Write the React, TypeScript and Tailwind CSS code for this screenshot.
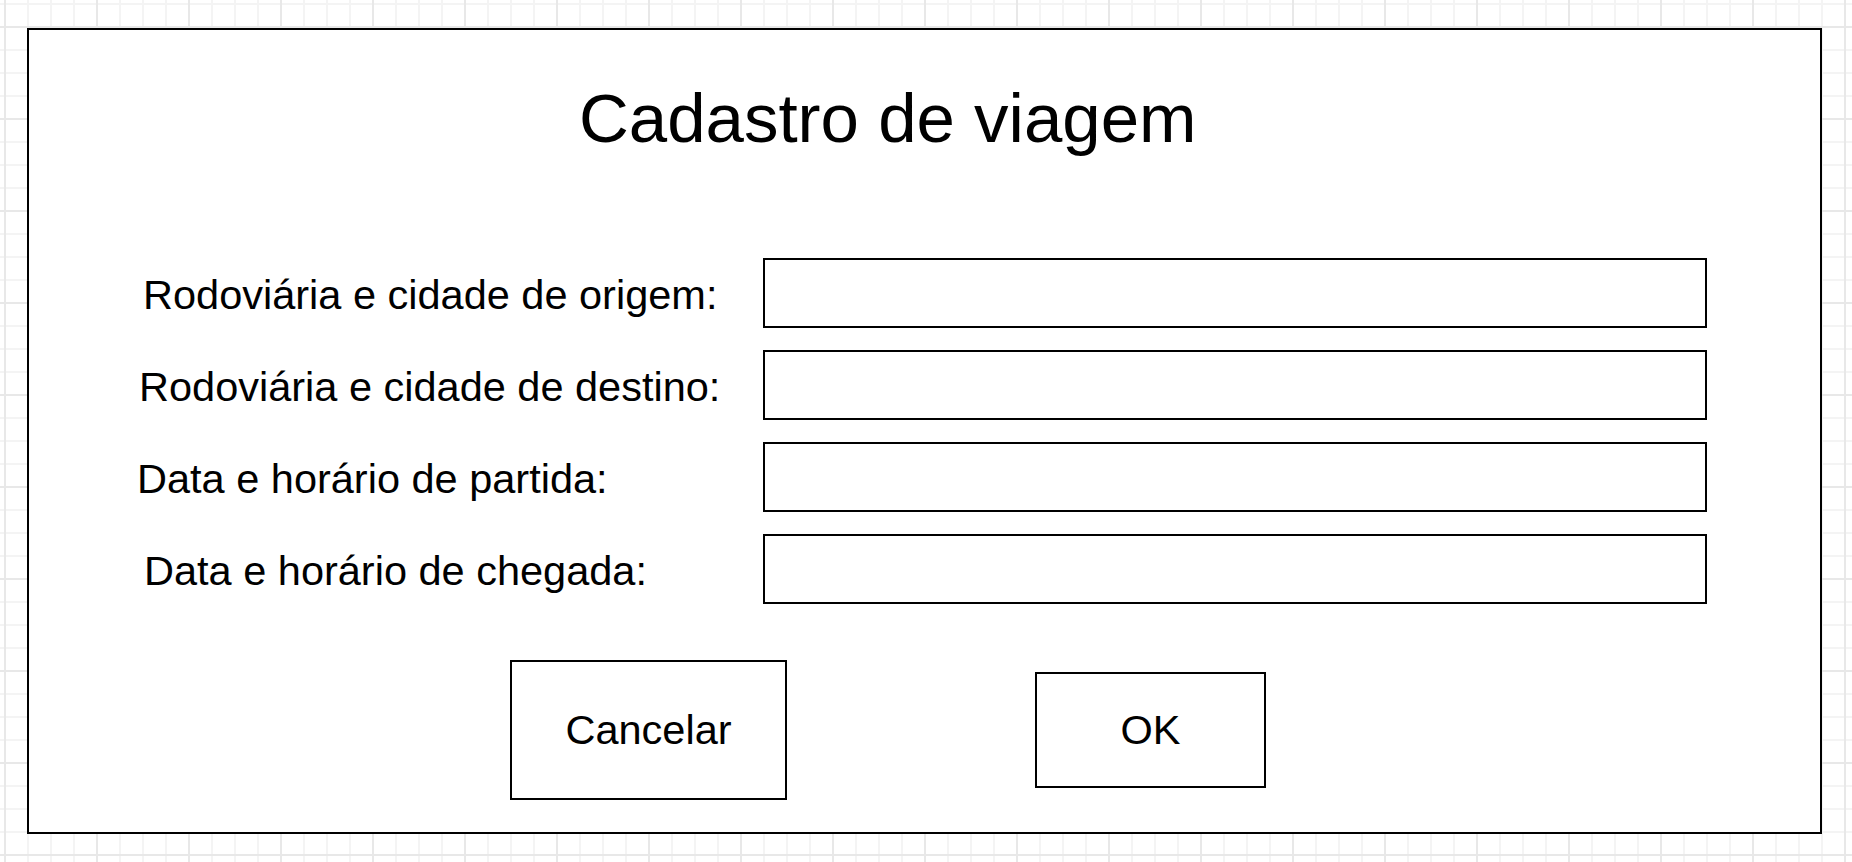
const fields = [
  { label: "Rodoviária e cidade de origem:", pad: "pl-[114px]" },
  { label: "Rodoviária e cidade de destino:", pad: "pl-[110px]" },
  { label: "Data e horário de partida:", pad: "pl-[108px]" },
  { label: "Data e horário de chegada:", pad: "pl-[115px]" },
];

export default function App() {
  return (
    <div className="w-[1852px] h-[862px] overflow-hidden pt-[28px] pl-[27px] bg-white bg-[linear-gradient(to_right,#e8e8e8_2px,transparent_2px),linear-gradient(to_bottom,#e8e8e8_2px,transparent_2px),linear-gradient(to_right,#f4f4f4_2px,transparent_2px),linear-gradient(to_bottom,#f4f4f4_2px,transparent_2px)] bg-[length:92px_92px,92px_92px,23px_23px,23px_23px] bg-[position:4px_26px,4px_26px,4px_3px,4px_3px] font-['Liberation_Sans',Arial,sans-serif] text-black">
      <div className="w-[1795px] h-[806px] border-2 border-black bg-white flex flex-col">
        {/* Title */}
        <h1 className="mt-[54px] ml-[550px] text-[69px] leading-[69px] font-normal">
          Cadastro de viagem
        </h1>

        {/* Form rows */}
        <div className="mt-[105px] flex flex-col gap-[22px]">
          {fields.map((f) => (
            <div key={f.label} className="flex items-center h-[70px]">
              <div className={`w-[734px] ${f.pad} pt-[3px] text-[41.5px] leading-none whitespace-nowrap`}>
                {f.label}
              </div>
              <div className="w-[944px] h-[70px] border-2 border-black bg-white" />
            </div>
          ))}
        </div>

        {/* Buttons */}
        <div className="mt-[56px] flex items-center h-[140px]">
          <button className="ml-[481px] w-[277px] h-[140px] border-2 border-black bg-white text-[41.5px] leading-none">
            Cancelar
          </button>
          <button className="ml-[248px] w-[231px] h-[116px] border-2 border-black bg-white text-[41.5px] leading-none">
            OK
          </button>
        </div>
      </div>
    </div>
  );
}
